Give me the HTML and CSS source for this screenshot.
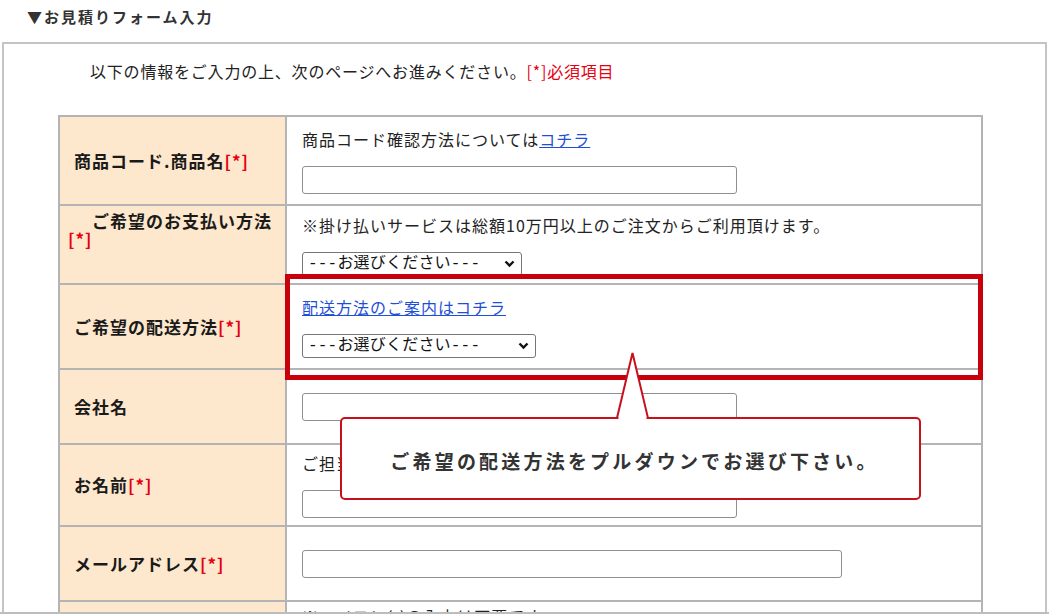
FILE: index.html
```html
<!DOCTYPE html>
<html lang="ja">
<head>
<meta charset="UTF-8">
<meta name="viewport" content="width=device-width, initial-scale=1.0">
<title>お見積りフォーム入力</title>
<link rel="stylesheet" href="styles.css">
</head>
<body>
<div class="page">
  <h2 class="form-title">▼お見積りフォーム入力</h2>
  <div class="form-box">
    <p class="intro">以下の情報をご入力の上、次のページへお進みください。<span class="req">[*]必須項目</span></p>
    <table class="form-table">
      <colgroup>
        <col class="col-label">
        <col>
      </colgroup>
      <tr class="row-code">
        <th>商品コード.商品名<span class="req">[*]</span></th>
        <td>
          <p class="note">商品コード確認方法については<a href="#">コチラ</a></p>
          <input type="text" class="field field-m">
        </td>
      </tr>
      <tr class="row-pay">
        <th class="label-wrap"><span class="label-indent">ご希望のお支払い方法</span><br><span class="req req-out">[*]</span></th>
        <td>
          <p class="note">※掛け払いサービスは総額10万円以上のご注文からご利用頂けます。</p>
          <span class="select-wrap select-pay">
            <select class="choice">
              <option>---お選びください---</option>
            </select>
            <svg class="chevron" width="11" height="8" viewBox="0 0 11 8" aria-hidden="true"><path d="M1.5 1.5 L5.5 5.5 L9.5 1.5" fill="none" stroke="#111" stroke-width="2.4"></path></svg>
          </span>
        </td>
      </tr>
      <tr class="row-ship">
        <th>ご希望の配送方法<span class="req">[*]</span></th>
        <td>
          <p class="note"><a href="#">配送方法のご案内はコチラ</a></p>
          <span class="select-wrap select-ship">
            <select class="choice">
              <option>---お選びください---</option>
            </select>
            <svg class="chevron" width="11" height="8" viewBox="0 0 11 8" aria-hidden="true"><path d="M1.5 1.5 L5.5 5.5 L9.5 1.5" fill="none" stroke="#111" stroke-width="2.4"></path></svg>
          </span>
        </td>
      </tr>
      <tr class="row-company">
        <th>会社名</th>
        <td><input type="text" class="field field-m"></td>
      </tr>
      <tr class="row-name">
        <th>お名前<span class="req">[*]</span></th>
        <td>
          <p class="note">ご担当者様のお名前をご入力ください。</p>
          <input type="text" class="field field-m">
        </td>
      </tr>
      <tr class="row-mail">
        <th>メールアドレス<span class="req">[*]</span></th>
        <td><input type="text" class="field field-l"></td>
      </tr>
      <tr class="row-tel">
        <th>電話番号<span class="req">[*]</span></th>
        <td class="top-cell"><p class="note">※ハイフン(-)の入力は不要です。</p></td>
      </tr>
    </table>

    <div class="highlight"></div>
    <div class="balloon">
      <svg class="balloon-tail" width="33" height="69" viewBox="0 0 33 69" aria-hidden="true">
        <polygon points="1,66 16.5,1 32,66" fill="#fff" stroke="#c8101a" stroke-width="2" stroke-linejoin="miter"></polygon>
        <rect x="2.5" y="65" width="28" height="4" fill="#fff"></rect>
      </svg>
      <p class="balloon-text">ご希望の配送方法をプルダウンでお選び下さい。</p>
    </div>
  </div>
</div>
</body>
</html>
```

FILE: styles.css
```css
body {
  margin: 0;
  font-family: "Noto Sans CJK JP", "Noto Sans", sans-serif;
  color: #222;
  background-color: #fff;
}

.page {
  height: 612px;
  overflow: hidden;
  border-bottom: 2px solid #bdbdbd;
}

.form-title {
  margin: 0;
  height: 42px;
  box-sizing: border-box;
  padding: 6px 0 0 27px;
  font-size: 15px;
  line-height: 22px;
  letter-spacing: 2px;
  font-weight: bold;
  color: #333;
}

.form-box {
  position: relative;
  margin-left: 2px;
  width: 1045px;
  height: 640px;
  box-sizing: border-box;
  border: 2px solid #c4c4c4;
  padding: 16px 0 0 54px;
}

.intro {
  margin: 0 0 33px 32px;
  font-size: 16px;
  line-height: 22px;
  letter-spacing: 0.8px;
}

.req {
  color: #e50012;
  font-weight: bold;
}

.intro .req {
  font-weight: normal;
}

.form-table {
  width: 925px;
  border-collapse: collapse;
  table-layout: fixed;
}

.col-label {
  width: 227px;
}

.form-table th,
.form-table td {
  border: 2px solid #b4b4b4;
  vertical-align: middle;
}

.form-table th {
  background-color: #fde8cd;
  text-align: left;
  padding: 0 6px 0 14px;
  font-size: 17px;
  line-height: 22px;
  letter-spacing: 1px;
  font-weight: bold;
  color: #1a1a1a;
}

.form-table td {
  padding: 0 15px;
  font-size: 16px;
  line-height: 22px;
  letter-spacing: 1px;
}

.form-table td.top-cell {
  vertical-align: top;
  padding-top: 3px;
}

.form-table th.label-wrap {
  line-height: 18px;
  padding-bottom: 30px;
}

.label-indent {
  padding-left: 18px;
}

.req-out {
  margin-left: -6px;
}

.note {
  margin: 0 0 16px;
}

.note a {
  color: #1f4fd6;
}

.row-code { height: 89px; }
.row-pay { height: 79px; }
.row-ship { height: 85px; }
.row-company { height: 75px; }
.row-name { height: 82px; }
.row-mail { height: 75px; }
.row-tel { height: 60px; }

.field {
  display: block;
  height: 28px;
  box-sizing: border-box;
  border: 1px solid #8f8f8f;
  border-radius: 3px;
  background-color: #fff;
}

.field-m {
  width: 435px;
}

.field-l {
  width: 540px;
}

.select-wrap {
  position: relative;
  display: block;
}

.select-pay {
  width: 220px;
}

.select-ship {
  width: 234px;
}

.choice {
  display: block;
  width: 100%;
  height: 24px;
  box-sizing: border-box;
  padding: 0 0 0 5px;
  -webkit-appearance: none;
  appearance: none;
  border: 1px solid #767676;
  border-radius: 3px;
  background-color: #fff;
  font-family: "Liberation Mono", "Noto Sans CJK JP", monospace;
  font-size: 16px;
  letter-spacing: 0.2px;
  color: #111;
}

.chevron {
  position: absolute;
  right: 7px;
  top: 8px;
  pointer-events: none;
}

/* 注目枠と吹き出し */
.highlight {
  position: absolute;
  left: 281px;
  top: 230px;
  width: 698px;
  height: 106px;
  box-sizing: border-box;
  border: 5px solid #c8000b;
}

.balloon {
  position: absolute;
  left: 336px;
  top: 373px;
  width: 581px;
  height: 83px;
  box-sizing: border-box;
  border: 2px solid #c8101a;
  border-radius: 5px;
  background-color: #fff;
  display: flex;
  align-items: center;
  justify-content: center;
}

.balloon-tail {
  position: absolute;
  left: 274px;
  top: -67px;
  display: block;
}

.balloon-text {
  margin: 4px 0 0 8px;
  font-size: 19px;
  line-height: 24px;
  letter-spacing: 3.2px;
  font-weight: bold;
  color: #333;
}
```
